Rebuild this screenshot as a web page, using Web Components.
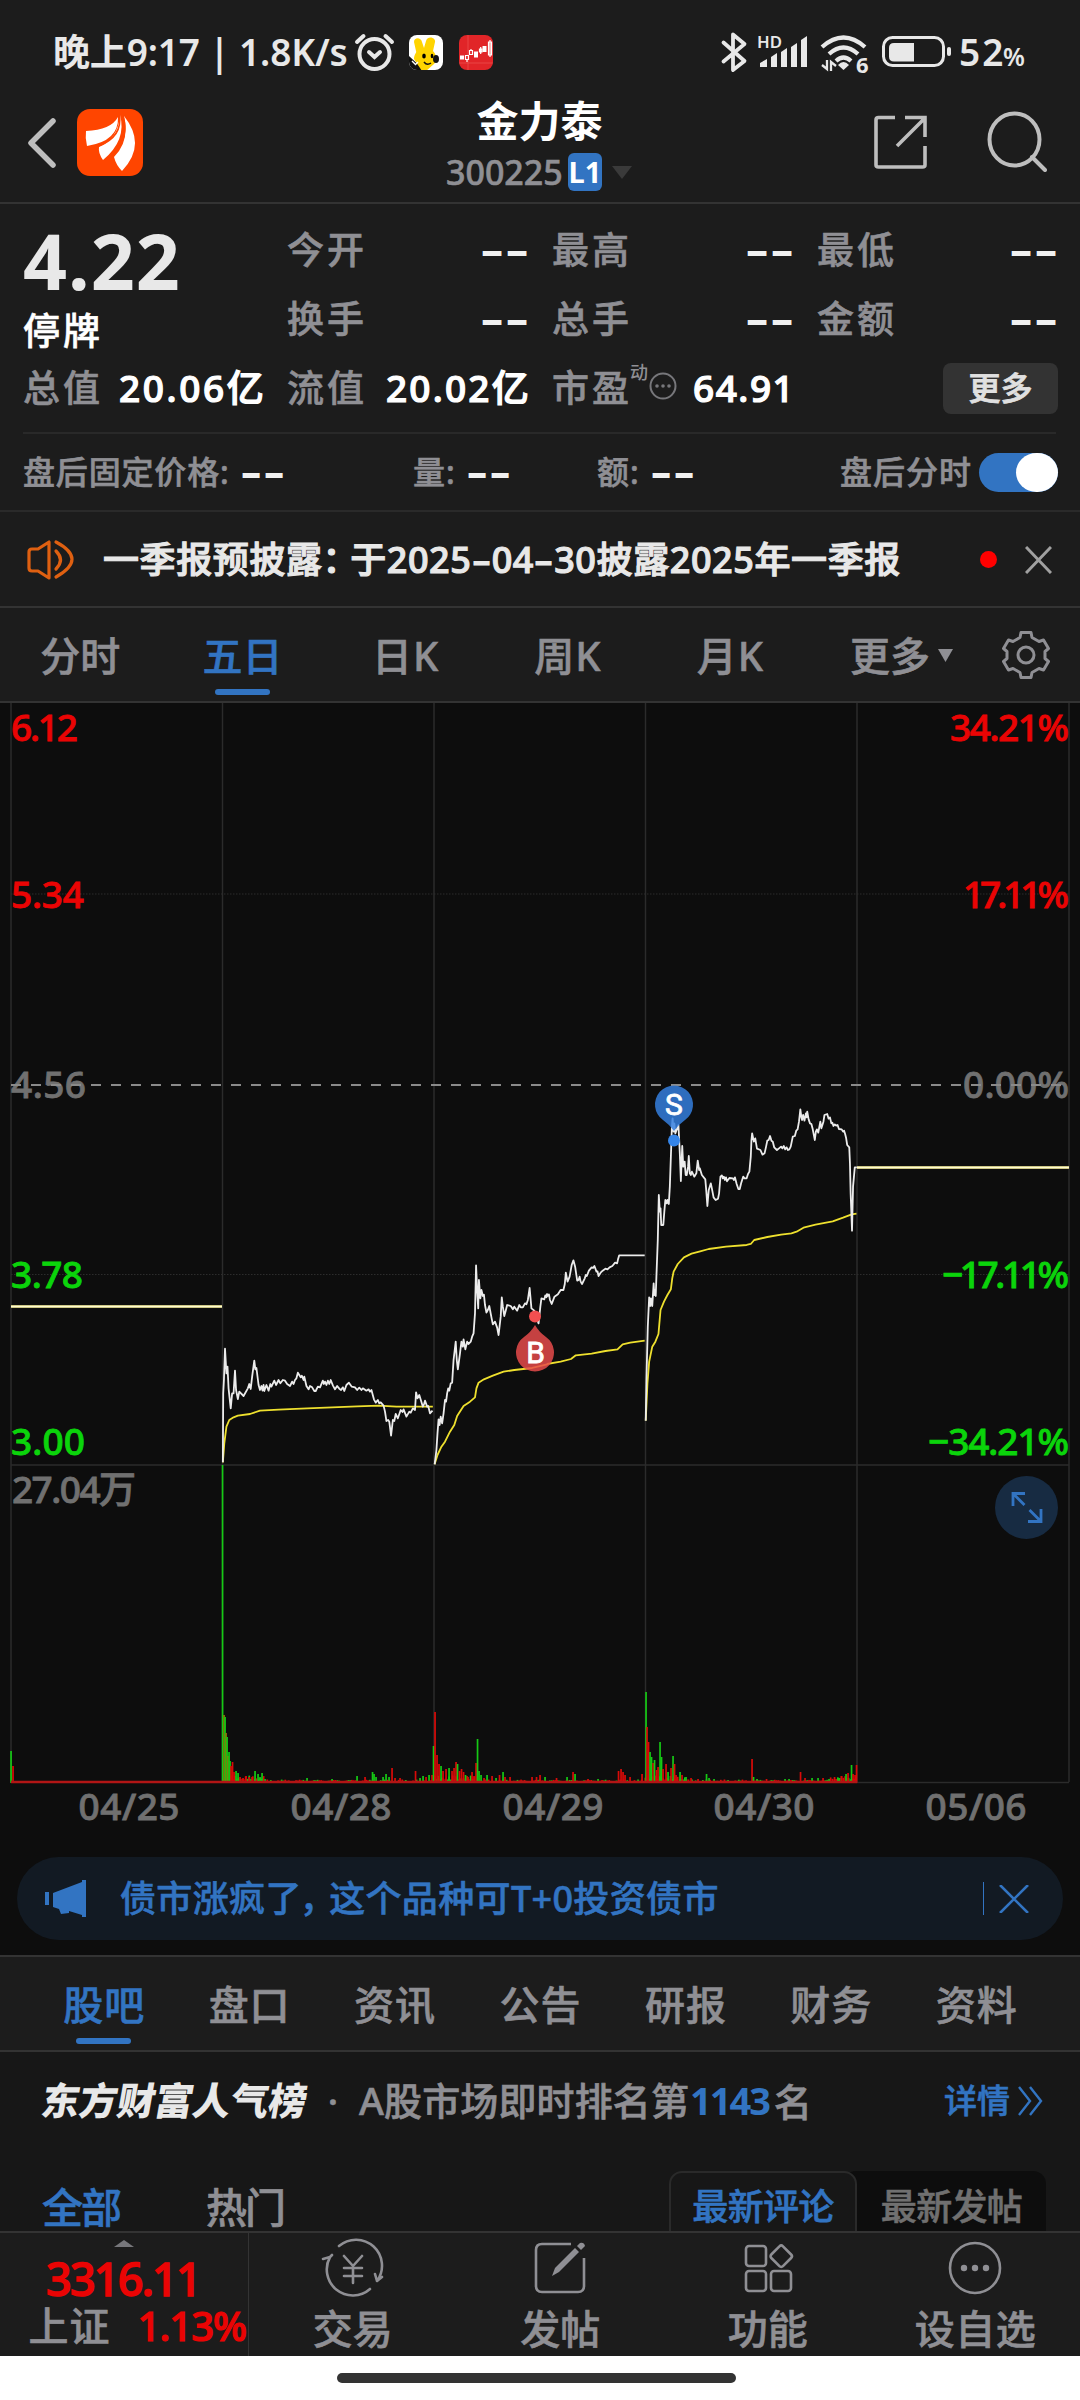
<!DOCTYPE html>
<html lang="zh-CN">
<head>
<meta charset="utf-8">
<title>金力泰 300225</title>
<style>
body{
    margin: 0;
    width: 1080px;
    height: 2400px;
    overflow: hidden;
    background: #1c1c1c;
    color: #8f8f94;
    font-family: "Noto Sans", "Noto Sans CJK SC", sans-serif;
    font-weight: 500;
    font-size: 37px;
    line-height: 1;
    -webkit-text-stroke: .6px;
    --blue: #3274c2;
    --line: #333;
}
.palt{ font-feature-settings: "palt"; }
.dash{ display: inline-block; transform: scaleX(1.6); padding: 0 4px; }
.punct{ padding-right: 9px; }
</style>
</head>
<body>
<status-bar></status-bar>
<stock-header name="金力泰" code="300225"></stock-header>
<quote-panel></quote-panel>
<after-hours></after-hours>
<news-bar><fit-text class="palt" w="797">一季报预披露<span class="punct">：</span>于2025<span class="dash">-</span>04<span class="dash">-</span>30披露2025年一季报</fit-text></news-bar>
<period-tabs></period-tabs>
<day-chart></day-chart>
<promo-pill><fit-text class="palt" w="598">债市涨疯了<span class="punct">，</span>这个品种可T+0投资债市</fit-text></promo-pill>
<info-tabs></info-tabs>
<rank-row></rank-row>
<post-filter></post-filter>
<bottom-bar></bottom-bar>
<home-bar></home-bar>

<script>
const define = (tag, html, setup) => {
    const template = document.createElement("template");
    template.innerHTML = html;
    customElements.define(tag, class extends HTMLElement {
        constructor() {
            super();
            this.attachShadow({ mode: "open" });
            this.shadowRoot.appendChild(template.content.cloneNode(true));
        }
        connectedCallback() {
            if (setup) setup(this, this.shadowRoot);
        }
    });
};

// Empty value
define("no-value", `
<style>
:host{ display: flex; justify-content: space-between; width: 45px; height: 36px; flex: none; color: #f0f0f0; font: 800 37px/36px Inter, sans-serif; -webkit-text-stroke: 0; }
span{ display: block; width: 20px; text-align: center; transform: scaleX(1.5); }
:host([small]){ width: 41px; }
:host([small]) span{ width: 18px; transform: scaleX(1.36); }
</style>
<span>-</span><span>-</span>
`);

define("status-bar", `
<style>
:host{ display: flex; align-items: center; height: 92px; padding: 12px 56px 0 53px; box-sizing: border-box; color: #e8e8e8; font-weight: 600; -webkit-text-stroke: 0; }
svg{ flex: none; display: block; }
.space{ flex: 1; }
.pct{ font-size: 25px; padding-top: 7px; }
</style>
<fit-text w="295">晚上9:17 | 1.8K/s</fit-text>
<svg width="42" height="40" style="margin-left:6px" viewBox="0 0 42 40" fill="none" stroke="#e8e8e8" stroke-width="4" stroke-linecap="round">
    <circle cx="20.5" cy="22" r="15"/><path d="M3 10l6.500-6M38 10l-6.500-6M15 20l5.500 5l5.500-5"/>
</svg>
<svg width="34" height="35" style="margin-left:13px" viewBox="0 0 34 35">
    <clipPath id="r"><rect width="34" height="35" rx="8"/></clipPath>
    <g clip-path="url(#r)"><rect width="34" height="35" fill="#fff"/>
    <path d="M0 21L15 35H0z" fill="#111"/>
    <path d="M5 7c0-5 7-5 8 0l2 6l2-7c2-6 10-3 9 1l-2 9c4 4 4 10 1 13l-8 7h-4L5 24c0-5 3-6 2-8z" fill="#ffd400"/>
    <ellipse cx="27" cy="24" rx="3" ry="4" fill="#111"/><ellipse cx="15" cy="21" rx="1.800" ry="2.600"/><ellipse cx="23" cy="21" rx="1.300" ry="2.300"/>
    <path d="M15 27q3 4 7 1" fill="none" stroke="#111" stroke-width="1.500"/><path d="M3 26l3 3M6 30l3-3" stroke="#fff" stroke-width="1.400"/></g>
</svg>
<svg width="34" height="35" style="margin-left:16px" viewBox="0 0 34 35">
    <rect width="34" height="35" rx="8" fill="#e12528"/><path d="M9 0v35M0 28h34" stroke="#ef5a58" stroke-width=".6"/>
    <g fill="#fff" stroke="#fff"><rect x="1.500" y="21" width="3" height="3"/><rect x="15.500" y="17" width="3" height="5"/><rect x="24" y="11.500" width="3" height="5"/></g>
    <path d="M6.500 20.500h3v4h-3zM8 24v3M10.500 15.500h3v4h-3zM12 14v2M20.500 14h2.500v3h-2.500zM21.700 12v7M29.500 7h3v13h-3zM31 5v17" fill="none" stroke="#fff" stroke-width="1.200"/>
</svg>
<div class="space"></div>
<svg width="240" height="42" viewBox="717 32 240 42" style="margin-right:2px" fill="none" stroke="#e8e8e8">
    <path d="M723.500 43.500l21 18.500l-11.500 9V35.500l11.500 9.500l-21 17.500" stroke-width="3.800" stroke-linecap="round" stroke-linejoin="round"/>
    <path d="M760 68v-4l7-4v8zM771 68v-10l6-4v14zM781 68v-15l6-4v19zM791 68v-20l6-4v24zM801 68v-27l6-4v31z" fill="#e8e8e8" stroke="none"/>
    <text x="757" y="48.500" font-size="16" fill="#e8e8e8" stroke="none" textLength="25" lengthAdjust="spacingAndGlyphs">HD</text>
    <path d="M822 48q21.500-19 43 0M829 55q14.500-13 29 0M836 62q7.500-7 15 0" stroke-width="4.200"/>
    <path d="M838 66q5.500-6 11 0l-5.500 5z" fill="#e8e8e8" stroke="none"/>
    <path d="M822 66l5 4V61M836 67l-5-4v9" stroke-width="2.300"/>
    <rect x="855" y="58" width="15" height="17" fill="#1c1c1c" stroke="none"/>
    <text x="856" y="73.500" font-size="22" font-weight="700" fill="#e8e8e8" stroke="none">6</text>
    <rect x="883.500" y="38.500" width="60" height="28" rx="9" stroke-width="3"/>
    <path d="M894 44h20v18.500h-20q-5 0-5-5v-8.500q0-5 5-5z" fill="#e8e8e8" stroke="none"/>
    <rect x="947" y="48" width="4" height="9" rx="2" fill="#e8e8e8" stroke="none"/>
</svg>
<fit-text w="44">52</fit-text><fit-text class="pct" w="21">%</fit-text>
`);

define("stock-header", `
<style>
:host{ display: grid; grid-template-columns: 1fr auto 1fr; height: 112px; box-sizing: border-box; border-bottom: 2px solid var(--line); padding: 3px 33px 0 27px; }
.left{ display: flex; align-items: center; margin-top: -12px; gap: 19px; }
.title{ display: flex; flex-direction: column; align-items: center; }
.name{ color: #fff; font-size: 42px; font-weight: 600; line-height: 52px; margin-left: 5px; -webkit-text-stroke: 0; }
.code{ display: flex; align-items: center; font-size: 34px; height: 38px; margin: 6px 0 0 4px; }
.badge{ width: 34px; height: 38px; border-radius: 6px; background: var(--blue); color: #fff; font-size: 29px; font-weight: 700; line-height: 38px; text-align: center; margin: 0 10px 0 5px; -webkit-text-stroke: 0; }
.right{ display: flex; justify-content: flex-end; align-items: center; gap: 59px; margin-top: -13px; }
</style>
<div class="left">
    <svg width="31" height="52" viewBox="0 0 31 52" fill="none" stroke="#bebebe" stroke-width="5.500" stroke-linecap="round" stroke-linejoin="round"><path d="M26 4L4 26l22 22"/></svg>
    <svg width="67" height="68" viewBox="0 0 67 68"><rect width="66" height="67" rx="13" fill="#ff4500"/>
        <g fill="#fff"><path d="M9 22q25-1 32-14q1 24-31 29q-2-8-1-15z"/>
        <path d="M43 6q7 25-17 45q-5-7-4-13q19-8 21-32z"/>
        <path d="M47 7q23 29-2 55q-6-6-8-14q16-16 10-41z"/></g>
        <path d="M42.500 6q3 22-21 31M46 7q6 20-8 37" fill="none" stroke="#ff4500" stroke-width="1.600"/></svg>
</div>
<div class="title">
    <div class="name"></div>
    <div class="code"><fit-text w="117"></fit-text><span class="badge">L1</span>
    <svg width="20" height="13" viewBox="0 0 20 13"><path d="M0 0h20L10 13z" fill="#3a3a3a"/></svg></div>
</div>
<div class="right">
    <svg width="54" height="54" viewBox="0 0 54 54" fill="none" stroke="#bebebe" stroke-width="3.600"><path d="M22 2.500H5.500q-2.500 0-2.500 2.500v45q0 2 2.500 2h44q2.500 0 2.500-2V31M32 2.500h20V22M24 31L51 4"/></svg>
    <svg width="61" height="62" viewBox="0 0 61 62" fill="none" stroke="#bebebe" stroke-width="4" stroke-linecap="round"><ellipse cx="28.500" cy="28.500" rx="25" ry="26"/><path d="M46 46l13 13"/></svg>
</div>
`, (host, root) => {
    root.querySelector(".name").textContent = host.getAttribute("name");
    root.querySelector("fit-text").textContent = host.getAttribute("code");
});

define("quote-panel", `
<style>
:host{ display: grid; grid-template-columns: 264px 265px 265px 239px; grid-template-rows: 69px 69px 68px; padding: 12px 24px 0 23px; height: 229px; box-sizing: border-box; }
.cell{ display: flex; align-items: center; }
.item{ justify-content: space-between; margin-right: 25px; }
.item.last{ margin-right: 0; }
.price{ grid-row: 1 / 3; color: #e8e8e8; display: flex; flex-direction: column; }
.price fit-text{ font-size: 77px; font-weight: 700; line-height: 86px; margin-top: 2px; -webkit-text-stroke: 0; }
.price .state{ color: #fff; line-height: 42px; font-size: 37px; font-weight: 500; margin-top: 6px; -webkit-text-stroke: .6px; }
b{ color: #fff; font-weight: 500; display: flex; -webkit-text-stroke: 1.2px; }
.item b{ margin-right: -2px; }
.pe{ grid-column: 3 / 5; }
.dyn{ font-size: 18px; line-height: 20px; align-self: flex-start; margin: 8px 0 0 1px; -webkit-text-stroke: 0; }
button{ margin-left: auto; width: 115px; height: 51px; border: 0; border-radius: 8px; background: #333; color: #e0e0e0; font: inherit; font-size: 32px; line-height: 48px; padding: 0; margin-right: -2px; -webkit-text-stroke: .8px; }
hr{ grid-column: 1 / 5; width: 100%; margin: 10px 0 0; border: 0; height: 2px; background: #292929; }
</style>
<div class="price"><fit-text w="157">4.22</fit-text><fit-text class="state" w="77">停牌</fit-text></div>
<div class="cell item"><fit-text w="77">今开</fit-text><no-value></no-value></div>
<div class="cell item"><fit-text w="77">最高</fit-text><no-value></no-value></div>
<div class="cell item last"><fit-text w="77">最低</fit-text><no-value></no-value></div>
<div class="cell item"><fit-text w="77">换手</fit-text><no-value></no-value></div>
<div class="cell item"><fit-text w="77">总手</fit-text><no-value></no-value></div>
<div class="cell item last"><fit-text w="77">金额</fit-text><no-value></no-value></div>
<div class="cell item"><fit-text w="77">总值</fit-text><b><fit-text w="145">20.06亿</fit-text></b></div>
<div class="cell item"><fit-text w="77">流值</fit-text><b><fit-text w="143">20.02亿</fit-text></b></div>
<div class="cell pe"><fit-text w="77">市盈</fit-text><span class="dyn">动</span>
    <svg width="28" height="28" style="margin:-4px 16px 0 1px" viewBox="0 0 28 28"><circle cx="14" cy="14" r="12.500" fill="none" stroke="#77777b" stroke-width="2"/><g fill="#77777b"><circle cx="8" cy="14" r="1.800"/><circle cx="14" cy="14" r="1.800"/><circle cx="20" cy="14" r="1.800"/></g></svg>
    <b><fit-text w="101">64.91</fit-text></b><button>更多</button></div>
<hr>
`);

define("after-hours", `
<style>
:host{ display: flex; align-items: center; height: 79px; box-sizing: border-box; padding: 2px 22px 0 23px; border-bottom: 2px solid #2a2a2a; font-size: 32px; }
no-value{ margin-left: 13px; }
.toggle{ width: 79px; height: 39px; border-radius: 20px; background: var(--blue); margin-left: 8px; display: flex; justify-content: flex-end; }
.toggle i{ width: 42px; height: 39px; border-radius: 21px / 20px; background: #fff; }
</style>
<fit-text w="206">盘后固定价格:</fit-text><no-value small></no-value>
<fit-text w="42" style="margin-left:130px">量:</fit-text><no-value small></no-value>
<fit-text w="42" style="margin-left:88px">额:</fit-text><no-value small></no-value>
<fit-text w="131" style="margin-left:auto">盘后分时</fit-text>
<div class="toggle"><i></i></div>
`);

define("news-bar", `
<style>
:host{ display: flex; align-items: center; height: 96px; box-sizing: border-box; padding: 1px 28px 0 26px; border-bottom: 2px solid var(--line); color: #e8e8e8; font-size: 36px; font-weight: 500; -webkit-text-stroke: 1.1px; }
i{ width: 17px; height: 17px; border-radius: 50%; background: #f00; margin: 0 28px 0 auto; flex: none; }
svg{ flex: none; }
</style>
<svg width="50" height="42" style="margin-right:27px" viewBox="0 0 50 42" fill="none" stroke="#df6011" stroke-width="3.200" stroke-linejoin="round" stroke-linecap="round">
    <path d="M23 3v36L12 32H6q-3 0-3-3V13q0-3 3-3h6zM30 12q9 9 0 18M30 3q32 17 0 35"/></svg>
<slot></slot>
<i></i>
<svg width="27" height="28" viewBox="0 0 27 28" stroke="#a0a0a0" stroke-width="3"><path d="M1 1l25 26M26 1L1 27"/></svg>
`);

define("period-tabs", `
<style>
:host{ display: flex; height: 95px; box-sizing: border-box; border-bottom: 2px solid var(--line); font-size: 40px; }
div{ width: 162.400px; display: flex; flex-direction: column; align-items: center; line-height: 48px; padding: 24px 2px 0 0; flex: none; box-sizing: border-box; }
.on{ color: var(--blue); }
.on::after{ content: ""; width: 55px; height: 6px; border-radius: 3px; background: var(--blue); margin-top: 9px; flex: none; }
.more{ width: 180px; flex-direction: row; padding-left: 38px; align-items: flex-start; gap: 8px; }
.more svg{ margin-top: 17px; flex: none; }
.gear{ margin: 21px 0 0 8px; }
</style>
<div><fit-text w="80">分时</fit-text></div>
<div class="on"><fit-text w="80">五日</fit-text></div>
<div><fit-text w="66">日K</fit-text></div>
<div><fit-text w="66">周K</fit-text></div>
<div><fit-text w="66">月K</fit-text></div>
<div class="more"><fit-text w="80">更多</fit-text><svg width="15" height="13" viewBox="0 0 15 13"><path d="M0 0h15L7.500 13z" fill="#8f8f94"/></svg></div>
<svg class="gear" width="52" height="52" viewBox="0 0 52 52" fill="none" stroke="#8f8f94" stroke-width="3" stroke-linejoin="round"><path d="M21 3.500h10l1 5l7 4l4.500-1.500l5 8.500l-3.500 3v7l3.500 3l-5 8.500l-4.500-1.500l-7 4l-1 5H21l-1-5l-7-4l-4.500 1.500l-5-8.500l3.500-3v-7l-3.500-3l5-8.500L13 12.500l7-4z"/><circle cx="26" cy="26" r="8"/></svg>
`);

define("day-chart", `
<style>
:host{ display: block; height: 1134px; background: #0d0d0d; }
svg{ display: block; }
text{ font-size: 37px; stroke-width: .8px; }
.up{ fill: #ea0404; stroke: #ea0404; }
.down{ fill: #0bd40b; stroke: #0bd40b; }
.flat{ fill: #707070; stroke: #707070; }
.lines path{ fill: none; stroke-linejoin: round; vector-effect: non-scaling-stroke; }
.avg{ stroke: #eee02e; stroke-width: 1.800; }
.now{ stroke: #ececec; stroke-width: 1.800; }
</style>
<svg width="1080" height="1134" viewBox="0 703 1080 1134">
    <g stroke="#2b2b2b" stroke-width="1.500"><path d="M11 703V1782M222.500 703V1782M434 703V1782M645.500 703V1782M857 703V1782M1069 703V1782M11 1465H1069M857 1782.500H1069"/></g>
    <path d="M11 894H1069M11 1274.500H1069" stroke="#2c2c2c" stroke-dasharray="1.500 1.500"/>
    <g class="bars"></g>
    <text class="up" x="11" y="741" textLength="67">6.12</text>
    <text class="up" x="11" y="908" textLength="73">5.34</text>
    <text class="flat" x="11" y="1098" textLength="75">4.56</text>
    <text class="down" x="11" y="1288" textLength="72">3.78</text>
    <text class="down" x="11" y="1455" textLength="74">3.00</text>
    <text class="flat" x="12" y="1502.500" textLength="124">27.04万</text>
    <text class="up" x="950" y="741" textLength="119">34.21%</text>
    <text class="up" x="963" y="908" textLength="106">17.11%</text>
    <text class="flat" x="963" y="1098" textLength="106">0.00%</text>
    <text class="down" x="942" y="1288" textLength="127">−17.11%</text>
    <text class="down" x="928" y="1455" textLength="141">−34.21%</text>
    <path d="M11 1085H1069" stroke="#8a8a8a" stroke-width="2" stroke-dasharray="10 10"/>
    <path d="M11 1306.500H222M857 1167.500H1069" stroke="#bdb66c" stroke-width="3"/>
    <path d="M11 1306.500H222M857 1167.500H1069" stroke="#fffbd0" stroke-width="1.400"/>
    <g class="lines" transform="translate(0 1060) scale(.35714 .33333)">
        <path class="avg" d="M624 1207L628 1150 634 1100 642 1080 654 1072 666 1067 700 1062 728 1052 780 1049 860 1045 1000 1039 1060 1037 1110 1040 1212 1040"/>
        <path class="avg" d="M1217 1213L1225 1185 1236 1160 1246 1145 1260 1115 1272 1095 1280 1068 1298 1038 1316 1025 1330 1012 1334 985 1340 968 1355 958 1380 947 1410 935 1440 930 1490 924 1532 913"/>
        <path class="now" d="M624 1207L625 1000 627 960 630 866 634 940 637 920 640 985 646 1045 650 1000 654 1000 658 932 661 990 666 1017 670 995 682 1008 694 985 698 972 702 987 706 950 712 902 715 928 718 924 724 975 728 990 732 978 735 992 738 975 740 993 746 975 752 992 757 972 760 980 768 962 773 975 780 960 785 970 792 960 798 962 804 972 812 978 818 965 822 972 826 960 830 955 834 938 842 952 845 947 850 960 852 950 858 978 864 988 868 978 874 982 880 993 884 993 890 980 896 982 904 962 907 972 910 965 914 975 918 962 922 972 926 960 932 976 938 988 944 978 950 986 955 990 960 982 964 993 970 975 977 968 985 980 994 982 1000 990 1006 983 1012 990 1016 985 1026 992 1032 988 1036 995 1040 990 1047 1018 1052 1028 1058 1020 1062 1030 1066 1027 1074 1037 1078 1055 1082 1083 1087 1080 1090 1085 1095 1127 1100 1080 1104 1083 1108 1062 1114 1075 1122 1050 1127 1056 1130 1048 1138 1070 1146 1055 1150 1058 1156 1045 1162 1050 1165 997 1169 1015 1174 1005 1180 1026 1184 1040 1188 1030 1190 1022 1196 1040 1199 1038 1204 1060 1211 1052"/>
        <path class="now" d="M1217 1213L1222 1170 1225 1120 1228 1078 1231 1095 1234 1070 1238 1090 1242 1060 1246 1020 1249 1025 1252 1000 1255 985 1258 992 1262 970 1266 968 1270 900 1276 845 1279 900 1282 928 1288 880 1292 845 1296 860 1298 838 1303 868 1308 845 1312 852 1318 845 1322 830 1326 820 1330 760 1333 616 1336 690 1339 745 1341 660 1345 715 1348 690 1352 708 1355 704 1358 735 1362 758 1366 750 1370 738 1376 772 1380 793 1386 785 1392 803 1396 825 1402 770 1405 712 1408 740 1412 768 1416 752 1420 735 1430 738 1436 748 1440 740 1448 752 1454 735 1458 742 1464 742 1470 730 1474 733 1478 720 1483 684 1488 745 1496 752 1503 775 1508 790 1513 740 1516 715 1524 718 1527 706 1530 712 1532 700"/>
    </g>
    <g class="lines" transform="translate(540 1060) scale(.34439 .33333)">
        <path class="avg" d="M20 912L60 905 90 897 104 886 150 881 190 873 225 868 240 853 262 848 304 842"/>
        <path class="avg" d="M307 1082L312 970 317 905 326 860 335 845 344 822 350 750 360 725 370 705 380 688 384 655 388 635 400 612 418 592 440 581 465 574 490 567 540 560 600 555 612 552 622 540 660 531 700 524 730 520 745 515 765 503 800 494 850 484 880 473 905 463 919 461"/>
        <path class="now" d="M20 702L22 708 26 703 29 720 34 732 42 710 52 703 60 690 68 690 72 672 75 638 80 665 86 650 92 615 97 601 102 620 108 662 112 660 115 650 118 665 122 672 130 655 133 645 136 648 142 632 150 622 154 624 158 618 164 635 167 634 170 648 176 638 182 632 190 626 196 628 202 622 210 618 218 608 224 610 227 596 230 586 304 586"/>
        <path class="now" d="M307 1082L309 960 313 800 317 712 320 738 322 715 326 738 330 670 332 705 334 690 336 708 338 650 342 540 345 405 348 455 350 445 352 495 358 495 361 455 364 420 368 430 370 420 374 432 377 380 381 260 383 200 385 175 388 215 390 190 393 220 402 195 406 280 409 363 413 258 416 320 420 305 423 345 426 345 430 320 432 288 435 340 438 345 441 335 448 350 454 340 458 302 462 330 464 325 470 345 480 358 483 395 486 438 490 390 496 370 499 385 504 412 510 420 517 416 520 400 524 350 528 346 531 355 534 350 537 360 540 352 543 364 550 354 560 355 563 360 566 352 571 372 576 387 580 387 584 370 590 350 594 355 600 355 604 342 608 335 612 290 614 240 616 220 621 245 625 235 630 266 640 270 646 284 652 280 656 262 660 242 664 240 668 228 672 242 676 245 680 262 688 270 694 265 700 260 704 265 708 258 712 268 716 262 720 270 724 268 728 260 734 230 740 228 744 212 748 208 752 185 756 148 759 172 761 180 764 165 768 182 772 160 774 172 776 155 780 178 784 190 788 192 792 208 798 240 801 215 804 208 808 218 814 185 817 205 820 195 823 185 826 165 834 162 838 176 842 172 846 190 849 188 852 198 856 193 860 197 864 195 868 207 876 208 880 215 883 212 886 222 889 235 892 255 898 262 900 310 902 400 906 512 909 380 914 322 920 322"/>
    </g>
    <path d="M674 1131Q670 1125 663 1120A19 19 0 1 1 685 1120Q678 1125 674 1131z" fill="#3580e0" fill-opacity=".84"/>
    <circle cx="674" cy="1140.500" r="6" fill="#3585e8"/>
    <text x="674" y="1115" text-anchor="middle" fill="#fff" stroke="#fff" style="font:30px Roboto, sans-serif">S</text>
    <path d="M535 1325Q539 1332 546 1337A19 19 0 1 1 524 1337Q531 1332 535 1325z" fill="#e84b4b" fill-opacity=".84"/>
    <circle cx="535" cy="1316.500" r="6" fill="#f24f50"/>
    <text x="535.500" y="1362.500" text-anchor="middle" fill="#fff" stroke="#fff" style="font:30px Roboto, sans-serif">B</text>
    <circle cx="1026.500" cy="1507.500" r="31.500" fill="#172b42"/>
    <path d="M1013 1506v-12.500h12M1013.500 1494l11 11M1041 1509v12.500h-13M1040.500 1521l-11-11" fill="none" stroke="#3274c2" stroke-width="2.800"/>
    <g class="flat" text-anchor="middle">
        <text x="129" y="1820" textLength="101">04/25</text>
        <text x="341" y="1820" textLength="101">04/28</text>
        <text x="553" y="1820" textLength="101">04/29</text>
        <text x="764" y="1820" textLength="101">04/30</text>
        <text x="976" y="1820" textLength="101">05/06</text>
    </g>
</svg>
`, (host, root) => {
    // x, height, colour (r / g) of the bars that stand out
    const bars = "11 32 g,13 17 r,222.5 318 g,224 68 o,225 66 g,226 50 o,227 46 g,228 27 o,229 31 g,230 22 g,231 17 r,232.5 21 r,234 11 r,236 12 g,238 10 g,240 6 r,243 5 r,246 7 r,249 6 r,252 6 r,255 12 g,258 9 g,260 6 g,262 10 g,265 4 g,307 5 g,332 4 g,357 7 g,365 6 r,372.5 11 g,374 9 g,376 6 g,383 6 g,386 9 g,389 6 g,392 15 r,395 5 r,400 5 r,415.5 12 r,420 5 g,423 7 g,426 6 r,429 8 g,432 8 r,433.5 37 g,435 71 r,437 28 r,439 19 r,441 17 g,443 12 r,446 14 r,449 15 g,452 12 r,454 15 r,456 21 r,457.5 19 g,459.5 12 r,461.5 14 r,463.5 11 r,465.5 8 g,468 6 r,472 11 r,474 7 r,476 20 r,477.5 44 g,479 12 g,481 8 g,484 5 r,487 8 g,492 7 r,496 5 g,499.5 8 r,503 11 g,505 6 r,510 6 r,532 6 r,536.5 6 r,540 8 r,545 6 g,556.5 5 r,567 6 g,573 11 r,575 9 g,588 4 r,598 4 g,618.5 12 r,621 14 r,623 11 r,625 8 r,630 6 r,642 9 r,646 91 g,647 56 r,648.5 41 r,650 31 g,651.5 26 g,653 20 r,654.5 23 g,656.500 13 r,658 16 r,660 41 g,661.5 26 g,663 14 r,666 19 r,668 11 g,671 15 r,673 27 g,674.5 19 r,676 8 r,680 11 g,682 8 r,686 6 g,691 5 r,698 4 r,706.5 9 g,709 5 g,714 4 g,752 24 r,753.5 6 g,757 4 g,766.500 4 r,785 4 g,789 4 g,800.5 11 r,805 5 r,812 5 g,818 5 g,823 5 r,829 4 g,834.5 6 r,838 5 g,841.5 7 r,846 9 g,848 10 r,851.5 18 g,853 9 r,855 8 r,856.5 18 r"
        .split(",").map(b => b.split(" "));
    // quiet minutes between them
    for (let x = 224, i = 0; x < 856; x += 1.8, i++) {
        const near = (x - 222) % 211.5 < 42 || x > 830;
        const h = (near ? 3.5 : 1.6) + Math.abs(Math.sin(i * 12.9) * Math.cos(i * 4.7)) * (near ? 4 : 2);
        bars.unshift([x.toFixed(1), h.toFixed(1), Math.sin(i * 7.3) > 0.25 ? "g" : "r"]);
    }
    const colours = { r: "#d90a08", g: "#16c914", o: "#8a7a08" };
    root.querySelector(".bars").innerHTML = bars.map(([x, h, c]) =>
        `<rect x="${x - 0.8}" y="${1783 - h}" width="1.7" height="${h}" fill="${colours[c]}"/>`
    ).join("") + `<path d="M11 1782H857" stroke="#b21515" stroke-width="2.400"/>`;
});

define("promo-pill", `
<style>
:host{ display: block; height: 120px; box-sizing: border-box; padding: 20px 17px 0; background: #0d0d0d; border-bottom: 2px solid var(--line); }
div{ display: flex; align-items: center; height: 83px; border-radius: 42px; background: #121a23; color: var(--blue); font-size: 36px; padding: 0 34px 0 27px; }
i{ width: 1px; height: 33px; background: var(--blue); margin: 0 15px 0 auto; }
svg{ flex: none; }
</style>
<div>
    <svg width="43" height="38" style="margin-right:33px" viewBox="0 0 43 38" fill="#3274c2"><path d="M1 12h4v13H1zM9 13L38 2V0h4v37h-4v-2l-13-4v2l-8 1l-2-5l-6-2z"/></svg>
    <slot></slot><i></i>
    <svg width="30" height="28" viewBox="0 0 30 28" stroke="#3274c2" stroke-width="2.600"><path d="M1 0l28 28M29 0L1 28"/></svg>
</div>
`);

define("info-tabs", `
<style>
:host{ display: flex; height: 95px; box-sizing: border-box; padding: 0 31px; border-bottom: 2px solid var(--line); font-size: 40px; }
div{ flex: 1; display: flex; flex-direction: column; align-items: center; line-height: 48px; padding-top: 24px; }
.on{ color: var(--blue); }
.on::after{ content: ""; width: 55px; height: 6px; border-radius: 3px; background: var(--blue); margin-top: 9px; flex: none; }
</style>
<div class="on"><fit-text w="81">股吧</fit-text></div>
<div><fit-text w="81">盘口</fit-text></div>
<div><fit-text w="81">资讯</fit-text></div>
<div><fit-text w="81">公告</fit-text></div>
<div><fit-text w="81">研报</fit-text></div>
<div><fit-text w="81">财务</fit-text></div>
<div><fit-text w="81">资料</fit-text></div>
`);

define("rank-row", `
<style>
:host{ display: flex; align-items: center; height: 100px; box-sizing: border-box; padding: 0 36px 2px 42px; background: #171717; font-size: 38px; }
.brand{ font-weight: 900; color: #e8e8e8; transform: skewX(-10deg); font-size: 38px; -webkit-text-stroke: 0; }
.dot{ width: 52px; text-align: center; }
b{ color: var(--blue); font-weight: 700; margin: 0 3px 0 1px; -webkit-text-stroke: 0; }
.link{ margin-left: auto; display: flex; align-items: center; gap: 7px; color: var(--blue); font-size: 33px; }
</style>
<fit-text class="brand" w="265">东方财富人气榜</fit-text><span class="dot">·</span>
<fit-text w="330">A股市场即时排名第</fit-text><b><fit-text w="81">1143</fit-text></b><span>名</span>
<div class="link"><fit-text w="66">详情</fit-text>
<svg width="27" height="30" viewBox="0 0 27 30" fill="none" stroke="#3274c2" stroke-width="2.400"><path d="M2 1l11 14L2 29M13 1l11 14l-11 14"/></svg></div>
`);

define("post-filter", `
<style>
:host{ display: flex; height: 79px; padding: 0 34px 0 42px; background: #171717; font-size: 41px; overflow: hidden; box-sizing: border-box; }
.t{ padding-top: 31px; line-height: 48px; margin-right: 84px; }
.on{ color: var(--blue); }
.box{ box-sizing: border-box; height: 80px; margin-top: 19px; padding-top: 14px; font-size: 36px; border-radius: 13px; text-align: center; }
.box.on{ width: 188px; margin-left: auto; border: 2px solid #2a2a2a; padding-top: 12px; background: #171717; z-index: 1; }
.box.off{ width: 203px; margin-left: -14px; padding-left: 14px; background: #0d0d0d; color: #707070; }
</style>
<div class="t on"><fit-text w="80">全部</fit-text></div>
<div class="t"><fit-text w="80">热门</fit-text></div>
<div class="box on"><fit-text w="142">最新评论</fit-text></div>
<div class="box off"><fit-text w="142">最新发帖</fit-text></div>
`);

define("bottom-bar", `
<style>
:host{ display: flex; height: 125px; box-sizing: border-box; border-top: 2px solid var(--line); font-size: 40px; background: #1c1c1c; }
.index{ width: 249px; box-sizing: border-box; border-right: 1.500px solid var(--line); display: flex; flex-direction: column; align-items: center; color: #ea0404; }
.index > svg{ margin: 7px 0 0 0; display: block; flex: none; }
.value{ font-size: 45px; line-height: 44px; margin: 10px 0 0; -webkit-text-stroke: 1.4px; }
.row{ display: flex; gap: 28px; width: 219px; margin: 3px 0 0 28px; }
.row fit-text{ line-height: 44px; }
.row fit-text:first-child{ color: #8f8f94; }
.row fit-text:last-child{ -webkit-text-stroke: 1.2px; }
.item{ width: 207.500px; display: flex; flex-direction: column; align-items: center; }
.item svg{ margin: 5px 0 7px; display: block; fill: none; stroke: #8f8f94; stroke-width: 2.600; }
.item fit-text{ line-height: 48px; }
</style>
<div class="index">
    <svg width="20" height="7" viewBox="0 0 20 7"><path d="M0 7L10 0l10 7z" fill="#77777b"/></svg>
    <fit-text class="value" w="156">3316.11</fit-text>
    <div class="row"><fit-text w="81">上证</fit-text><fit-text w="110">1.13%</fit-text></div>
</div>
<div class="item">
    <svg width="64" height="60" viewBox="-32 -30 64 60" stroke-linecap="round" stroke-linejoin="round"><path d="M-14-22A26 26 0 0 1 24 13L29 9M24 13L22 6M17 21A26 26 0 0 1-23-11L-30-9M-23-11L-21-13M-9-12L0-2L9-12M0-2V15M-9 0H9M-9 8H9"/></svg>
    <fit-text w="80">交易</fit-text></div>
<div class="item">
    <svg width="60" height="60" viewBox="-30 -30 60 60"><path d="M11-24H-18Q-24-24-24-18V18Q-24 24-18 24H18Q24 24 24 18V-10"/><path d="M-8 8L-5 0L15-20L19-16L-1 4zM17-22L20-25Q24-26 25-22L21-18z" fill="#8f8f94" stroke="none"/></svg>
    <fit-text w="80">发帖</fit-text></div>
<div class="item">
    <svg width="60" height="60" viewBox="-30 -30 60 60"><rect x="-22" y="-22" width="20" height="20" rx="3"/><rect x="-22" y="3" width="20" height="20" rx="3"/><rect x="3" y="3" width="20" height="20" rx="3"/><rect x="5" y="-20" width="16.500" height="16.500" rx="2.500" transform="rotate(45 13.200 -11.800)"/></svg>
    <fit-text w="80">功能</fit-text></div>
<div class="item">
    <svg width="60" height="60" viewBox="-30 -30 60 60"><circle r="25"/><g fill="#8f8f94" stroke="none"><circle cx="-11" r="3.200"/><circle r="3.200"/><circle cx="11" r="3.200"/></g></svg>
    <fit-text w="121">设自选</fit-text></div>
`);

define("home-bar", `
<style>
:host{ display: flex; justify-content: center; height: 44px; background: #fff; }
i{ width: 399px; height: 10px; border-radius: 5px; background: #333; margin: 17px 7px 0 0; }
</style>
<i></i>
`);

// One line of text tracked so that it fills "w" pixels.
// Defined last: the fonts set by the elements around it must be known when it measures.
define("fit-text", `
<style>
:host{ display: inline-block; white-space: nowrap; flex: none; line-height: 1.2; }
</style>
<span><slot></slot></span>
`, (host, root) => {
    const w = Number(host.getAttribute("w"));
    if (!w) return;
    const natural = root.querySelector("span").offsetWidth;
    const count = host.textContent.length;
    host.style.width = w + "px";
    host.style.letterSpacing = (w - natural) / Math.max(1, count - 1) + "px";
});
</script>
</body>
</html>
